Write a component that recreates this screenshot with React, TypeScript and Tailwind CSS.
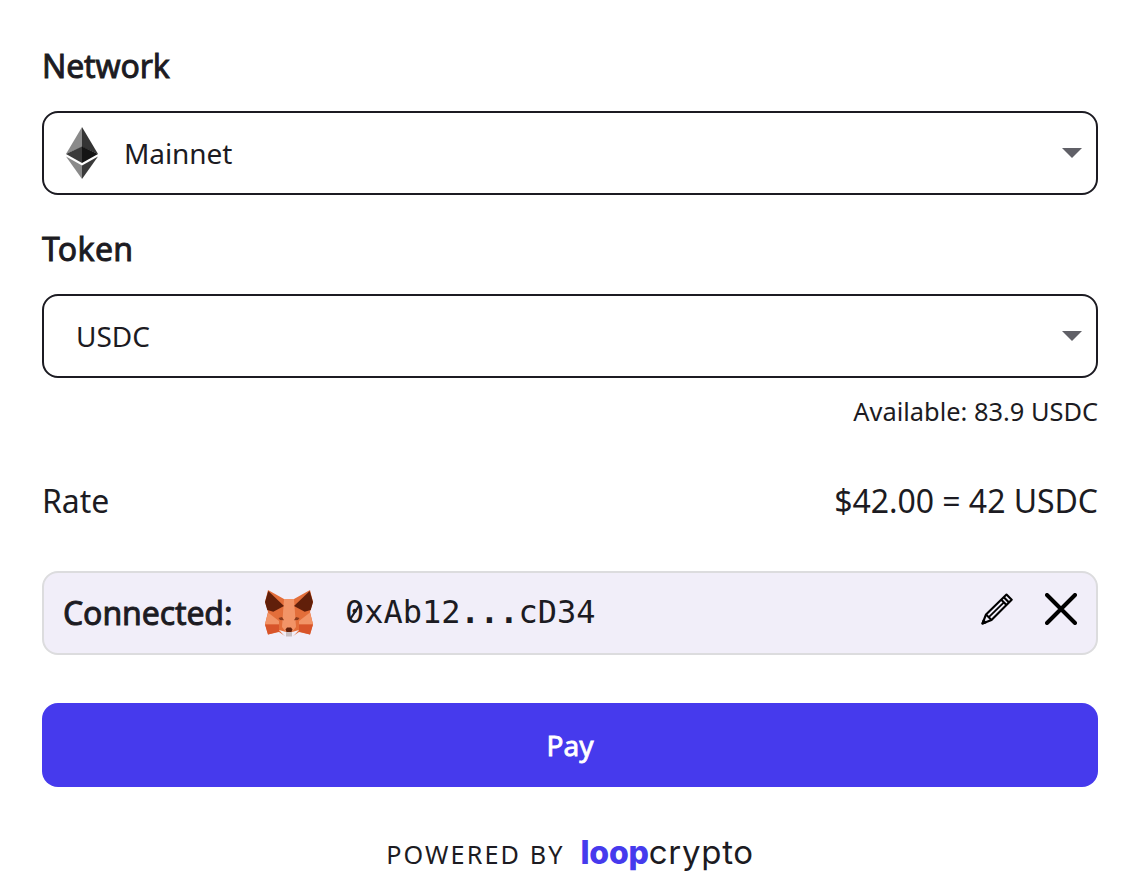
const ETH_FACETS = [
  { points: '16,0 16,20 0,27', fill: '#8a8a8a' },
  { points: '16,0 16,20 32,27', fill: '#343434' },
  { points: '16,19.5 0,27 16,36', fill: '#3a3a3a' },
  { points: '16,19.5 32,27 16,36', fill: '#141414' },
  { points: '0,29.5 16,38.5 16,52', fill: '#8a8a8a' },
  { points: '32,29.5 16,38.5 16,52', fill: '#3a3a3a' },
];

const FOX_FACETS = [
  { points: '3,0 19,9 29,9 45,0 48,12 45,22 48,34 45,44.5 34,42 28,46 20,46 14,42 3,44.5 0,34 3,22 0,12', fill: '#e36e3a' },
  { points: '19,9 29,9 30,23 31,37 27,42 21,42 17,37 18,23', fill: '#f29467' },
  { points: '3.3,1 19,16 8.3,21.7 2.3,20 0,12', fill: '#611f0a' },
  { points: '44.7,1 29,16 39.7,21.7 45.7,20 48,12', fill: '#611f0a' },
  { points: '3,22.5 14,31 14,34.5 0,34.5', fill: '#f29467' },
  { points: '45,22.5 34,31 34,34.5 48,34.5', fill: '#f29467' },
  { points: '0,34.5 14,34.5 14,41.5 3,44.5', fill: '#d8542a' },
  { points: '48,34.5 34,34.5 34,41.5 45,44.5', fill: '#d8542a' },
  { points: '13.5,28 17,27 19,30.3 15,30', fill: '#8a3a1c' },
  { points: '34.5,28 31,27 29,30.3 33,30', fill: '#8a3a1c' },
  { points: '14,40 21,42 27,42 34,40 28,46.5 20,46.5', fill: '#f1eef9' },
  { points: '21,42 27,42 27,46.5 21,46.5', fill: '#c8bfc2' },
  { points: '22,37.5 26,37.5 27.5,39.5 26.5,42 21.5,42 20.5,39.5', fill: '#611f0a' },
];

function EthIcon() {
  return (
    <svg width="32" height="52" viewBox="0 0 32 52">
      {ETH_FACETS.map((f) => (
        <polygon key={f.points} points={f.points} fill={f.fill} />
      ))}
    </svg>
  );
}

function FoxIcon() {
  return (
    <svg width="48" height="48" viewBox="0 -1 48 48">
      {FOX_FACETS.map((f) => (
        <polygon key={f.points} points={f.points} fill={f.fill} />
      ))}
    </svg>
  );
}

function PencilIcon() {
  return (
    <svg width="32" height="32" viewBox="0 0 32 32" fill="none" stroke="currentColor" strokeWidth="2.1" strokeLinejoin="round">
      <path d="M1.5 30.5L5 21.5L25.5 1.5L30.7 6.8L10.5 27Z" />
      <path d="M5 21.5L10.5 27M20.3 6.8L25.5 12M22.8 4.3L28 9.5" />
      <path d="M7.8 24.2L22.9 9.4" strokeWidth="1.8" />
      <path d="M1.5 30.5L2.5 27.5L4.5 29.5Z" fill="currentColor" />
    </svg>
  );
}

function CloseIcon() {
  return (
    <svg width="32" height="32" viewBox="0 0 32 32" fill="none" stroke="currentColor" strokeWidth="4" strokeLinecap="round">
      <path d="M2 2L30 30M30 2L2 30" />
    </svg>
  );
}

function Caret() {
  return (
    <svg className="ml-auto" width="20" height="10" viewBox="0 0 20 10">
      <polygon points="0,0 20,0 10,10" fill="#606067" />
    </svg>
  );
}

export default function App() {
  return (
    <main className="flex h-[886px] w-full flex-col bg-white pt-[44px] pr-[44px] pl-[42px] font-['Noto_Sans',sans-serif] text-[#1c1b22]">
      <label className="text-[32px] leading-[44px] tracking-[-0.15px] [-webkit-text-stroke:0.9px_currentColor]">Network</label>
      <button className="mt-[23px] flex h-[84px] items-center rounded-2xl border-2 border-[#1c1b22] pr-[14px] pl-[22px]">
        <EthIcon />
        <span className="ml-[26px] text-[28px] tracking-[-0.1px]">Mainnet</span>
        <Caret />
      </button>

      <label className="mt-8 text-[32px] leading-[44px] tracking-[0.3px] [-webkit-text-stroke:0.9px_currentColor]">Token</label>
      <button className="mt-[23px] flex h-[84px] items-center rounded-2xl border-2 border-[#1c1b22] pr-[14px] pl-8">
        <span className="text-[28px]">USDC</span>
        <Caret />
      </button>
      <p className="mt-[15px] text-right text-[25.4px] leading-[36px]">Available: 83.9 USDC</p>

      <div className="mt-[50px] flex justify-between text-[32px] leading-[44px] tracking-[-0.05px]">
        <span>Rate</span>
        <span>$42.00 = 42 USDC</span>
      </div>

      <div className="mt-[48px] flex h-[84px] items-center rounded-2xl border-2 border-[#dcdcde] bg-[#f1eef9] pr-[19px] pl-[19px]">
        <span className="w-[170px] text-[32px] tracking-[-0.1px] [-webkit-text-stroke:0.9px_currentColor]">Connected:</span>
        <span className="ml-8"><FoxIcon /></span>
        <span className="mb-0.5 ml-8 font-['DejaVu_Sans_Mono',monospace] text-[32px]">
          <span className="relative">
            0
            {/* slash through the zero */}
            <svg className="absolute top-[7px] left-0" width="19" height="24" viewBox="0 0 19 24">
              <path d="M5 19.5L14.5 5" stroke="currentColor" strokeWidth="2.2" />
            </svg>
          </span>
          xAb12<span className="font-bold">...</span>cD34
        </span>
        <div className="mb-2 ml-auto flex gap-8 text-black">
          <PencilIcon />
          <CloseIcon />
        </div>
      </div>

      <button className="mt-12 h-[84px] rounded-2xl bg-[#463aed] text-[28px] text-white [-webkit-text-stroke:0.8px_currentColor]">Pay</button>

      <footer className="mt-[41px] flex items-center justify-center">
        <span className="mt-1 text-[25.2px] tracking-[2.1px]">POWERED BY</span>
        <span className="ml-4 font-['Inter',sans-serif] text-[32px]">
          <span className="font-extrabold tracking-[-0.2px] text-[#463aed]">loop</span>
          <span className="text-[33px] tracking-[0.7px]">crypto</span>
        </span>
      </footer>
    </main>
  );
}
